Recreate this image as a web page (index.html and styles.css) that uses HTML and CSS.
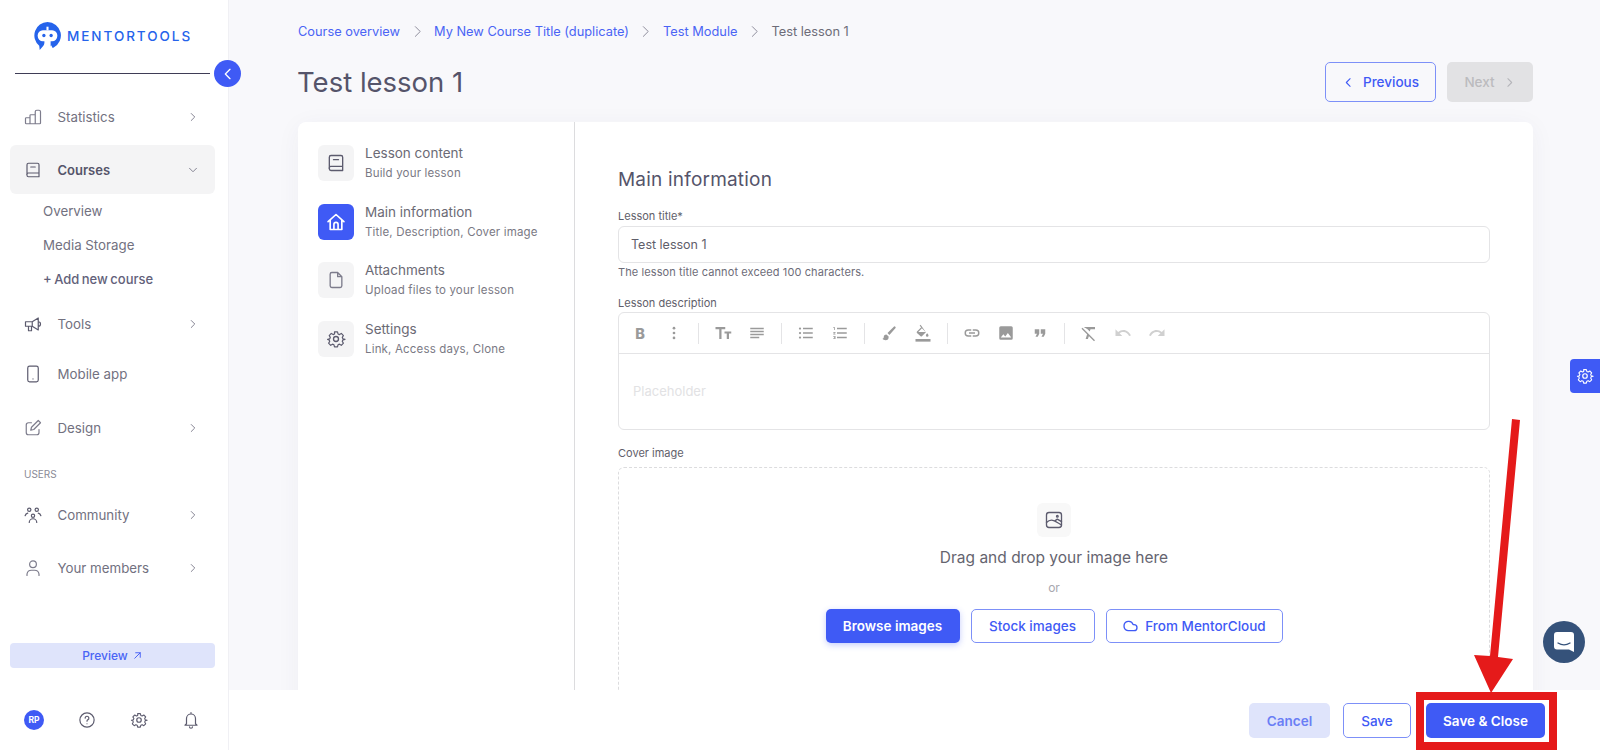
FILE: index.html
```html
<!doctype html>
<html lang="en">
    <head>
        <meta charset="utf-8">
        <title>Test lesson 1</title>
        <link rel="stylesheet" href="styles.css">
    </head>
    <body>
        <aside class="sidebar">
            <div class="logo">
                <svg class="logo-mark" viewBox="0 0 28 28" width="29" height="29">
                    <path d="M14 1a13 13 0 0 1 6 24.500l-1 .5-1.500-2.500-2 2.500-1-5.500H12l-2 3.500-3.500 4 -.5-4A13 13 0 0 1 14 1z" fill="#2563eb"/>
                    <rect x="4.500" y="9" width="19" height="10.500" rx="5" fill="#fff"/>
                    <rect x="11" y="19" width="6" height="9" fill="#fff"/>
                    <rect x="13" y="5.500" width="2" height="3.500" fill="#fff"/>
                    <circle cx="10.500" cy="14" r="1.600" fill="#2563eb"/>
                    <circle cx="17.500" cy="14" r="1.600" fill="#2563eb"/>
                </svg>
                <span class="logo-text">MENTORTOOLS</span>
            </div>
            <div class="sidebar-rule">
                <span class="collapse-btn">
                    <svg viewBox="0 0 24 24" width="16" height="16"><path d="M15 5l-7 7 7 7" class="ico-white"/></svg>
                </span>
            </div>

            <nav class="nav">
                <a class="nav-item">
                    <svg class="nav-ico" viewBox="0 0 24 24"><path d="M2 14a1 1 0 0 1 1-1h5v8H3a1 1 0 0 1-1-1zM8 10a1 1 0 0 1 1-1h6v12H8zM15 5a2 2 0 0 1 2-2h3a2 2 0 0 1 2 2v15a1 1 0 0 1-1 1h-6z" class="ico"/></svg>
                    <span class="nav-label">Statistics</span>
                    <svg class="nav-caret" viewBox="0 0 24 24"><path d="M9 6l6 6-6 6" class="ico"/></svg>
                </a>
                <a class="nav-item active">
                    <svg class="nav-ico" viewBox="0 0 24 24"><path d="M4 19V5a2 2 0 0 1 2-2h12a2 2 0 0 1 2 2v16H6a2 2 0 0 1-2-2zm0 0a2 2 0 0 1 2-3h14M9 8h6" class="ico-dark"/></svg>
                    <span class="nav-label">Courses</span>
                    <svg class="nav-caret" viewBox="0 0 24 24"><path d="M6 9l6 6 6-6" class="ico"/></svg>
                </a>
                <div class="subnav">
                    <a class="sub-item">Overview</a>
                    <a class="sub-item">Media Storage</a>
                    <a class="sub-item sub-add">+ Add new course</a>
                </div>
                <a class="nav-item">
                    <svg class="nav-ico" viewBox="0 0 24 24"><path d="M2 9h9l8-5v16l-8-5H2zM6 15v6h4v-6M19 9a3 3 0 0 1 0 6M11 9v6" class="ico-dark"/></svg>
                    <span class="nav-label">Tools</span>
                    <svg class="nav-caret" viewBox="0 0 24 24"><path d="M9 6l6 6-6 6" class="ico"/></svg>
                </a>
                <a class="nav-item nav-mobile">
                    <svg class="nav-ico" viewBox="0 0 24 24"><rect x="5" y="1.500" width="14" height="21" rx="2.500" class="ico-dark"/><path d="M12 18.500h.01" class="ico-dark"/></svg>
                    <span class="nav-label">Mobile app</span>
                </a>
                <a class="nav-item nav-design">
                    <svg class="nav-ico" viewBox="0 0 24 24"><path d="M10 5H6a3 3 0 0 0-3 3v10a3 3 0 0 0 3 3h11a3 3 0 0 0 3-3v-4M9 15l1-4 9-9 3 3-9 9z" class="ico"/></svg>
                    <span class="nav-label">Design</span>
                    <svg class="nav-caret" viewBox="0 0 24 24"><path d="M9 6l6 6-6 6" class="ico"/></svg>
                </a>
                <div class="nav-heading">USERS</div>
                <a class="nav-item">
                    <svg class="nav-ico" viewBox="0 0 24 24"><circle cx="7" cy="5" r="2.200" class="ico-dark"/><circle cx="17" cy="5" r="2.200" class="ico-dark"/><circle cx="12" cy="13" r="2.200" class="ico-dark"/><path d="M1.500 13a5 5 0 0 1 3.500-3.500M22.500 13a5 5 0 0 0-3.500-3.500M7 22a5 5 0 0 1 10 0" class="ico-dark"/></svg>
                    <span class="nav-label">Community</span>
                    <svg class="nav-caret" viewBox="0 0 24 24"><path d="M9 6l6 6-6 6" class="ico"/></svg>
                </a>
                <a class="nav-item">
                    <svg class="nav-ico" viewBox="0 0 24 24"><circle cx="12" cy="7" r="4.500" class="ico"/><path d="M4 22v-2a6 6 0 0 1 6-5h4a6 6 0 0 1 6 5v2" class="ico"/></svg>
                    <span class="nav-label">Your members</span>
                    <svg class="nav-caret" viewBox="0 0 24 24"><path d="M9 6l6 6-6 6" class="ico"/></svg>
                </a>
            </nav>

            <a class="preview-btn">Preview
                <svg viewBox="0 0 24 24" width="11" height="11"><path d="M6 18L18 6M8 6h10v10" class="ico-blue"/></svg>
            </a>

            <div class="sidebar-tools">
                <span class="avatar">RP</span>
                <svg class="tool-ico" viewBox="0 0 24 24"><circle cx="12" cy="12" r="9.500" class="ico-dark"/><path d="M9.500 9.500a2.500 2.500 0 1 1 3.500 2.300c-.7.400-1 .9-1 1.700M12 17h.01" class="ico-dark"/></svg>
                <svg class="tool-ico" viewBox="0 0 24 24"><use href="#gear"/></svg>
                <svg class="tool-ico" viewBox="0 0 24 24"><path d="M6 17V10a6 6 0 0 1 12 0v7l2 2H4zM10 21a2 2 0 0 0 4 0M12 2v2" class="ico-dark"/></svg>
            </div>
        </aside>

        <div class="page">
            <main class="page-body">
                <div class="crumbs">
                    <a>Course overview</a>
                    <svg class="crumb-sep" viewBox="0 0 24 24"><path d="M8 3l9 9-9 9" class="ico"/></svg>
                    <a>My New Course Title (duplicate)</a>
                    <svg class="crumb-sep" viewBox="0 0 24 24"><path d="M8 3l9 9-9 9" class="ico"/></svg>
                    <a>Test Module</a>
                    <svg class="crumb-sep" viewBox="0 0 24 24"><path d="M8 3l9 9-9 9" class="ico"/></svg>
                    <span>Test lesson 1</span>
                </div>

                <div class="title-row">
                    <h1>Test lesson 1</h1>
                    <div class="pager">
                        <a class="btn btn-outline btn-prev">
                            <svg viewBox="0 0 24 24" width="13" height="13"><path d="M15 5l-7 7 7 7" class="ico-blue"/></svg>
                            Previous
                        </a>
                        <a class="btn btn-disabled">
                            Next
                            <svg viewBox="0 0 24 24" width="13" height="13"><path d="M9 5l7 7-7 7" class="ico-muted"/></svg>
                        </a>
                    </div>
                </div>

                <section class="card">
                    <div class="tabs">
                        <div class="tab">
                            <span class="tab-ico"><svg viewBox="0 0 24 24" width="20" height="20"><path d="M4 19V5a2 2 0 0 1 2-2h12a2 2 0 0 1 2 2v16H6a2 2 0 0 1-2-2zm0 0a2 2 0 0 1 2-3h14M9 8h6" class="ico-dark"/></svg></span>
                            <div>
                                <div class="tab-title">Lesson content</div>
                                <div class="tab-sub">Build your lesson</div>
                            </div>
                        </div>
                        <div class="tab">
                            <span class="tab-ico tab-ico-on"><svg viewBox="0 0 24 24" width="20" height="20"><path d="M2.500 11.500L12 3l9.500 8.500M5 9.500V21h14V9.500M9.500 21v-6a2.500 2.500 0 0 1 5 0v6" class="ico-white"/></svg></span>
                            <div>
                                <div class="tab-title">Main information</div>
                                <div class="tab-sub">Title, Description, Cover image</div>
                            </div>
                        </div>
                        <div class="tab">
                            <span class="tab-ico"><svg viewBox="0 0 24 24" width="20" height="20"><path d="M14 3H7a2 2 0 0 0-2 2v14a2 2 0 0 0 2 2h10a2 2 0 0 0 2-2V8zM14 3v5h5" class="ico"/></svg></span>
                            <div>
                                <div class="tab-title">Attachments</div>
                                <div class="tab-sub">Upload files to your lesson</div>
                            </div>
                        </div>
                        <div class="tab">
                            <span class="tab-ico"><svg viewBox="0 0 24 24" width="20" height="20"><use href="#gear"/></svg></span>
                            <div>
                                <div class="tab-title">Settings</div>
                                <div class="tab-sub">Link, Access days, Clone</div>
                            </div>
                        </div>
                    </div>

                    <div class="form">
                        <h2>Main information</h2>

                        <label class="field-label">Lesson title*</label>
                        <div class="input">Test lesson 1</div>
                        <p class="hint">The lesson title cannot exceed 100 characters.</p>

                        <label class="field-label field-desc">Lesson description</label>
                        <div class="editor">
                            <div class="toolbar">
                                <span class="tb-btn tb-bold">B</span>
                                <span class="tb-btn"><svg viewBox="0 0 24 24"><circle cx="12" cy="5.500" r="1.800"/><circle cx="12" cy="12" r="1.800"/><circle cx="12" cy="18.500" r="1.800"/></svg></span>
                                <i class="tb-sep"></i>
                                <span class="tb-btn"><svg viewBox="0 0 24 24"><path d="M2 4h13v3h-5v13H7V7H2zM14 10h9v2.500h-3V20h-3v-7.500h-3z"/></svg></span>
                                <span class="tb-btn"><svg viewBox="0 0 24 24"><path d="M3 5h18v2H3zM3 9h18v2H3zM3 13h18v2H3zM3 17h12v2H3z"/></svg></span>
                                <i class="tb-sep"></i>
                                <span class="tb-btn"><svg viewBox="0 0 24 24"><path d="M8 5h13v2H8zM8 11h13v2H8zM8 17h13v2H8z"/><circle cx="4" cy="6" r="1.500"/><circle cx="4" cy="12" r="1.500"/><circle cx="4" cy="18" r="1.500"/></svg></span>
                                <span class="tb-btn"><svg viewBox="0 0 24 24"><path d="M8 5h13v2H8zM8 11h13v2H8zM8 17h13v2H8zM3 4h2v4H4V5H3zM3 10.500h3v1l-2 1.500h2v1H3v-1l2-1.500H3zM3 16h3v4H3v-1h2v-.5H4v-1h1V17H3z"/></svg></span>
                                <i class="tb-sep"></i>
                                <span class="tb-btn"><svg viewBox="0 0 24 24"><path d="M20.500 3.500a1.500 1.500 0 0 0-2.100 0L10 12l2.500 2.500 8-8.900a1.500 1.500 0 0 0 0-2.100zM8.500 14A3.500 3.500 0 0 0 5 17.500c0 1-.8 2-2 2.300 1 1 2.800 1.700 4.500 1.700a4 4 0 0 0 4-4c0-.4-.1-.8-.2-1.100z"/></svg></span>
                                <span class="tb-btn"><svg viewBox="0 0 24 24"><path d="M10 1L8.500 2.500 11 5 4.500 11.500a1.500 1.500 0 0 0 0 2.100l5.500 5a1.500 1.500 0 0 0 2 0l6-6L10 1zM6.500 12L12 6.500 17.500 12zM20 14s-2 2.200-2 3.500a2 2 0 0 0 4 0c0-1.300-2-3.500-2-3.500z" transform="scale(.88)"/><rect x="2" y="20" width="20" height="3.500"/></svg></span>
                                <i class="tb-sep"></i>
                                <span class="tb-btn"><svg viewBox="0 0 24 24"><path d="M3.900 12A3.100 3.100 0 0 1 7 8.900h4V7H7a5 5 0 0 0 0 10h4v-1.900H7A3.100 3.100 0 0 1 3.900 12zM8 13h8v-2H8zm9-6h-4v1.900h4a3.100 3.100 0 0 1 0 6.200h-4V17h4a5 5 0 0 0 0-10z"/></svg></span>
                                <span class="tb-btn"><svg viewBox="0 0 24 24"><path d="M21 19V5a2 2 0 0 0-2-2H5a2 2 0 0 0-2 2v14a2 2 0 0 0 2 2h14a2 2 0 0 0 2-2zM8.500 13.500l2.500 3 3.500-4.500 4.500 6H5z"/></svg></span>
                                <span class="tb-btn"><svg viewBox="0 0 24 24"><path d="M6 17h3l2-4V7H5v6h3zM14 17h3l2-4V7h-6v6h3z"/></svg></span>
                                <i class="tb-sep"></i>
                                <span class="tb-btn"><svg viewBox="0 0 24 24"><path d="M5 4h15v3h-6l-1 3-3-3zM3.300 5L2 6.300 18.700 23l1.300-1.300zM9.500 13.500L7.500 20h3l1.500-4.500z"/></svg></span>
                                <span class="tb-btn tb-off"><svg viewBox="0 0 24 24"><path d="M12.500 8c-2.700 0-5 1-7 2.600L2 7v9h9l-3.600-3.600c1.400-1.200 3.200-1.900 5.100-1.900 3.500 0 6.500 2.300 7.600 5.500l2.400-.8C21 11.500 17.100 8 12.500 8z"/></svg></span>
                                <span class="tb-btn tb-off"><svg viewBox="0 0 24 24"><path d="M18.400 10.600C16.500 9 14.100 8 11.500 8c-4.700 0-8.600 3.100-10 7.200l2.400.8c1-3.200 4-5.500 7.600-5.500 2 0 3.700.7 5.100 1.900L13 16h9V7z"/></svg></span>
                            </div>
                            <div class="editor-body">Placeholder</div>
                        </div>

                        <label class="field-label field-cover">Cover image</label>
                        <div class="dropzone">
                            <span class="drop-ico"><svg viewBox="0 0 24 24" width="20" height="20"><rect x="3" y="3" width="18" height="18" rx="3" class="ico-dark"/><path d="M3 15c5-5 9-3 18 3M13 13l3-2 5 3" class="ico-dark"/><circle cx="16" cy="7.500" r="1" class="ico-dark"/></svg></span>
                            <p class="drop-text">Drag and drop your image here</p>
                            <p class="drop-or">or</p>
                            <div class="drop-actions">
                                <a class="btn btn-primary btn-shadow btn-browse">Browse images</a>
                                <a class="btn btn-outline btn-stock">Stock images</a>
                                <a class="btn btn-outline btn-cloud">
                                    <svg viewBox="0 0 24 24" width="16" height="16"><path d="M18 10h-1.300A7 7 0 1 0 9 19h9a4.500 4.500 0 0 0 0-9z" class="ico-blue"/></svg>
                                    From MentorCloud
                                </a>
                            </div>
                        </div>
                    </div>
                </section>
            </main>

            <footer class="page-foot">
                <a class="btn btn-soft btn-cancel">Cancel</a>
                <a class="btn btn-outline btn-save">Save</a>
                <a class="btn btn-primary btn-close">Save &amp; Close</a>
            </footer>
        </div>

        <span class="side-tab">
            <svg viewBox="0 0 24 24" width="18" height="18"><use href="#gear" class="gear-white"/></svg>
        </span>
        <span class="chat-bubble">
            <svg viewBox="0 0 24 24" width="24" height="24"><path d="M5 2h14a3 3 0 0 1 3 3v17l-5-2.500H5a3 3 0 0 1-3-3V5a3 3 0 0 1 3-3z" fill="#fff"/><path d="M6 13c3.500 2.200 8.500 2.200 12 0" fill="none" stroke="#35527a" stroke-width="1.300" stroke-linecap="round"/></svg>
        </span>

        <!-- annotation drawn over the screenshot -->
        <span class="callout-box"></span>
        <svg class="callout-arrow" viewBox="0 0 70 280" width="70" height="280">
            <path d="M52 1L60 2 38 239 53 241 31 275 14 237 30 238z" fill="#e51a1a"/>
        </svg>

        <svg class="defs" width="0" height="0">
            <symbol id="gear" viewBox="0 0 24 24">
                <path d="M10 2.500h4l.7 2.800 1.900.8 2.500-1.500 2.800 2.800-1.500 2.500.8 1.900 2.800.7v0l-2.800.7-.8 1.900 1.500 2.500-2.800 2.800-2.500-1.500-1.900.8-.7 2.800h-4l-.7-2.800-1.900-.8-2.500 1.500-2.800-2.800 1.500-2.500-.8-1.900L.8 12.500v0l2.800-.7.8-1.900-1.500-2.500 2.800-2.800 2.500 1.500 1.900-.8z" fill="none" stroke="currentColor" stroke-width="1.600" stroke-linejoin="round" transform="translate(1.200 1.200) scale(.9)"/>
                <circle cx="12" cy="12" r="3" fill="none" stroke="currentColor" stroke-width="1.600"/>
            </symbol>
        </svg>
    </body>
</html>
```

FILE: styles.css
```css
* {
    box-sizing: border-box;
}

html,
body {
    margin: 0;
    height: 100%;
    overflow: hidden;
}

body {
    display: flex;
    font-family: Inter, "Liberation Sans", sans-serif;
    color: #4b4a5e;
    background: #f8f8fb;
}

a {
    text-decoration: none;
}

.ico,
.ico-dark,
.ico-white,
.ico-blue,
.ico-muted {
    fill: none;
    stroke-width: 1.6;
    stroke-linecap: round;
    stroke-linejoin: round;
}

.ico { stroke: #7d7c8c; }
.ico-dark { stroke: #5c5b6e; }
.ico-white { stroke: #fff; stroke-width: 2; }
.ico-blue { stroke: #3f5af5; stroke-width: 2; }
.ico-muted { stroke: #b5b5ba; stroke-width: 2; }

.defs {
    position: absolute;
}

/* Sidebar */

.sidebar {
    position: relative;
    flex: 0 0 229px;
    display: flex;
    flex-direction: column;
    height: 750px;
    background: #fff;
    border-right: 1px solid #f0f0f4;
}

.logo {
    display: flex;
    align-items: center;
    gap: 5px;
    height: 73px;
    padding: 0 0 2px 33px;
}

.logo-mark {
    flex: none;
}

.logo-text {
    font-size: 13.500px;
    font-weight: 500;
    letter-spacing: 1.950px;
    color: #2563eb;
}

.sidebar-rule {
    position: relative;
    height: 1px;
    margin: 0 18px 0 15px;
    background: #3f3d56;
}

.collapse-btn {
    position: absolute;
    top: -13px;
    right: -31px;
    display: flex;
    align-items: center;
    justify-content: center;
    width: 27px;
    height: 27px;
    border-radius: 50%;
    background: #3f5af5;
}

.nav {
    display: flex;
    flex-direction: column;
    margin-top: 18px;
    padding: 0 13px 0 10px;
}

.nav-item {
    display: flex;
    align-items: center;
    height: 49px;
    margin-bottom: 4px;
    padding: 0 15px 0 14px;
    border-radius: 6px;
    font-size: 13.300px;
    color: #72717f;
}

.nav-item.active {
    margin-bottom: 0;
    background: #f4f4f5;
    font-size: 13px;
    font-weight: 600;
    color: #55546a;
}

.nav-mobile {
    height: 40px;
    margin: 2px 0 9px;
}

.nav-ico {
    flex: none;
    width: 18px;
    height: 18px;
    margin-right: 15.500px;
}

.nav-label {
    flex: 1;
}

.nav-caret {
    flex: none;
    width: 14px;
    height: 14px;
}

.subnav {
    display: flex;
    flex-direction: column;
    margin-bottom: 3px;
}

.sub-item {
    display: flex;
    align-items: center;
    height: 34px;
    padding-left: 33px;
    font-size: 13.300px;
    color: #72717f;
}

.sub-add {
    font-size: 13px;
    font-weight: 500;
    color: #62617a;
    word-spacing: -1px;
}

.nav-heading {
    margin: 5px 0 0 14px;
    height: 29px;
    font-size: 10px;
    line-height: 26px;
    color: #8a8a96;
}

.preview-btn {
    display: flex;
    align-items: center;
    justify-content: center;
    gap: 4px;
    position: absolute;
    top: 643px;
    left: 10px;
    width: 205px;
    height: 25px;
    border-radius: 4px;
    background: #dfe4fb;
    font-size: 12px;
    font-weight: 500;
    color: #4a64f5;
}

.sidebar-tools {
    display: flex;
    align-items: center;
    justify-content: space-between;
    position: absolute;
    top: 710px;
    left: 24px;
    width: 176px;
    height: 20px;
}

.avatar {
    display: flex;
    align-items: center;
    justify-content: center;
    width: 20px;
    height: 20px;
    border-radius: 50%;
    background: #3f5af5;
    font-size: 8.500px;
    font-weight: 700;
    color: #fff;
}

.tool-ico {
    width: 18px;
    height: 18px;
    color: #5c5b6e;
}

/* Page */

.page {
    flex: 1;
    display: flex;
    flex-direction: column;
    min-width: 0;
    height: 750px;
}

.page-body {
    flex: 1;
    min-height: 0;
    overflow: hidden;
    padding: 22px 67px 0 69px;
}

.crumbs {
    display: flex;
    align-items: center;
    height: 18px;
    font-size: 12.800px;
    color: #6d6c78;
}

.crumbs a {
    color: #4a64f5;
}

.crumb-sep {
    width: 13px;
    height: 13px;
    margin: 0 10.500px;
}

.title-row {
    display: flex;
    align-items: center;
    justify-content: space-between;
    height: 40px;
    margin-top: 22px;
    margin-bottom: 20px;
}

h1 {
    margin: 0 0 0 -1px;
    font-size: 27.500px;
    font-weight: 400;
    color: #55546a;
}

.pager {
    display: flex;
    gap: 11px;
}

.btn {
    display: inline-flex;
    align-items: center;
    justify-content: center;
    gap: 8px;
    height: 34px;
    border-radius: 5px;
    font-size: 13.500px;
    font-weight: 500;
}

.btn-outline {
    border: 1px solid #7d90f8;
    background: #fff;
    color: #3f5af5;
}

.btn-primary {
    background: #3f5af5;
    font-weight: 600;
    color: #fff;
}

.btn-shadow {
    box-shadow: 0 2px 6px rgba(63, 90, 245, .3);
}

.btn-soft {
    background: #dfe4fb;
    color: #6a7ef5;
    font-weight: 600;
}

.btn-disabled {
    width: 86px;
    height: 40px;
    background: #e2e2e4;
    color: #bbbbbe;
}

.btn-prev {
    width: 111px;
    height: 40px;
    background: transparent;
}

.card {
    display: flex;
    height: 640px;
    border-radius: 8px;
    background: #fff;
    box-shadow: 0 4px 24px rgba(60, 60, 90, .05);
}

.tabs {
    flex: 0 0 277px;
    padding: 23px 0 0 20px;
    border-right: 1px solid #dcdcde;
}

.tab {
    display: flex;
    gap: 11px;
    height: 58.500px;
}

.tab-ico {
    flex: none;
    display: flex;
    align-items: center;
    justify-content: center;
    width: 36px;
    height: 36px;
    border-radius: 6px;
    background: #f4f4f5;
    color: #5c5b6e;
}

.tab-ico-on {
    background: #3f5af5;
}

.tab-title {
    margin-top: -1px;
    font-size: 13.500px;
    line-height: 18px;
    color: #6b6a75;
}

.tab-sub {
    margin-top: 3px;
    font-size: 11.500px;
    letter-spacing: .17px;
    line-height: 16px;
    color: #7a7984;
}

.form {
    flex: 1;
    min-width: 0;
    padding: 46px 43px 0;
}

h2 {
    margin: 0;
    font-size: 19px;
    letter-spacing: .2px;
    font-weight: 400;
    line-height: 24px;
    color: #55546a;
}

.field-label {
    display: block;
    margin-top: 17px;
    font-size: 11px;
    line-height: 14px;
    color: #5f5e6a;
}

.input {
    display: flex;
    align-items: center;
    height: 37px;
    margin-top: 3px;
    padding: 0 12px;
    border: 1px solid #e4e4e6;
    border-radius: 6px;
    font-size: 12.500px;
    color: #5f5e6a;
}

.hint {
    margin: 2px 0 0;
    font-size: 11px;
    letter-spacing: .1px;
    line-height: 14px;
    color: #6d6c78;
}

.field-label.field-desc {
    margin-top: 17px;
}

.editor {
    height: 118px;
    margin-top: 2px;
    border: 1px solid #e4e4e6;
    border-radius: 6px;
}

.toolbar {
    display: flex;
    align-items: center;
    height: 41px;
    padding: 0 4px;
    border-bottom: 1px solid #e4e4e6;
}

.tb-btn {
    display: flex;
    align-items: center;
    justify-content: center;
    width: 34px;
    height: 34px;
    color: #9a9a9a;
}

.tb-btn svg {
    width: 18px;
    height: 18px;
    fill: currentColor;
}

.tb-bold {
    font-size: 14.500px;
    font-weight: 800;
}

.tb-off {
    color: #d0d0d0;
}

.tb-sep {
    flex: none;
    width: 1px;
    height: 21px;
    margin: 0 7px;
    background: #e4e4e6;
}

.editor-body {
    padding: 28px 14px 0;
    font-size: 13px;
    line-height: 18px;
    color: #e2e2e4;
}

.field-label.field-cover {
    margin-top: 16px;
}

.dropzone {
    display: flex;
    flex-direction: column;
    align-items: center;
    height: 300px;
    margin-top: 7px;
    padding-top: 35px;
    border: 1px dashed #dcdcde;
    border-radius: 6px;
}

.drop-ico {
    display: flex;
    align-items: center;
    justify-content: center;
    width: 34px;
    height: 34px;
    border-radius: 6px;
    background: #f8f8f8;
    color: #5c5b6e;
}

.drop-text {
    margin: 11px 0 0;
    font-size: 15.500px;
    line-height: 20px;
    color: #65646f;
}

.drop-or {
    margin: 11px 0 0;
    font-size: 12px;
    line-height: 18px;
    color: #a8a8ae;
}

.drop-actions {
    display: flex;
    gap: 11px;
    margin-top: 12px;
}

.btn-browse {
    width: 134px;
}

.btn-stock {
    width: 124px;
}

.btn-cloud {
    width: 177px;
    gap: 7px;
}

.page-foot {
    flex: 0 0 60px;
    display: flex;
    align-items: flex-start;
    padding: 13px 55px 0 0;
    justify-content: flex-end;
    background: #fff;
}

.page-foot .btn {
    height: 35px;
}

.btn-cancel {
    width: 81px;
    margin-right: 13px;
}

.btn-save {
    width: 68px;
    margin-right: 15px;
}

.btn-close {
    width: 119px;
}

/* Floating bits */

.side-tab {
    display: flex;
    align-items: center;
    justify-content: center;
    position: absolute;
    top: 359px;
    left: 1570px;
    width: 30px;
    height: 34px;
    border-radius: 4px 0 0 4px;
    background: #3f5af5;
    color: #fff;
}

.chat-bubble {
    display: flex;
    align-items: center;
    justify-content: center;
    position: absolute;
    top: 621px;
    left: 1543px;
    width: 42px;
    height: 42px;
    border-radius: 50%;
    background: #35527a;
}

.callout-box {
    position: absolute;
    top: 692px;
    left: 1416px;
    width: 141px;
    height: 58px;
    border: 8px solid #e51a1a;
}

.callout-arrow {
    position: absolute;
    top: 418px;
    left: 1460px;
}
```
